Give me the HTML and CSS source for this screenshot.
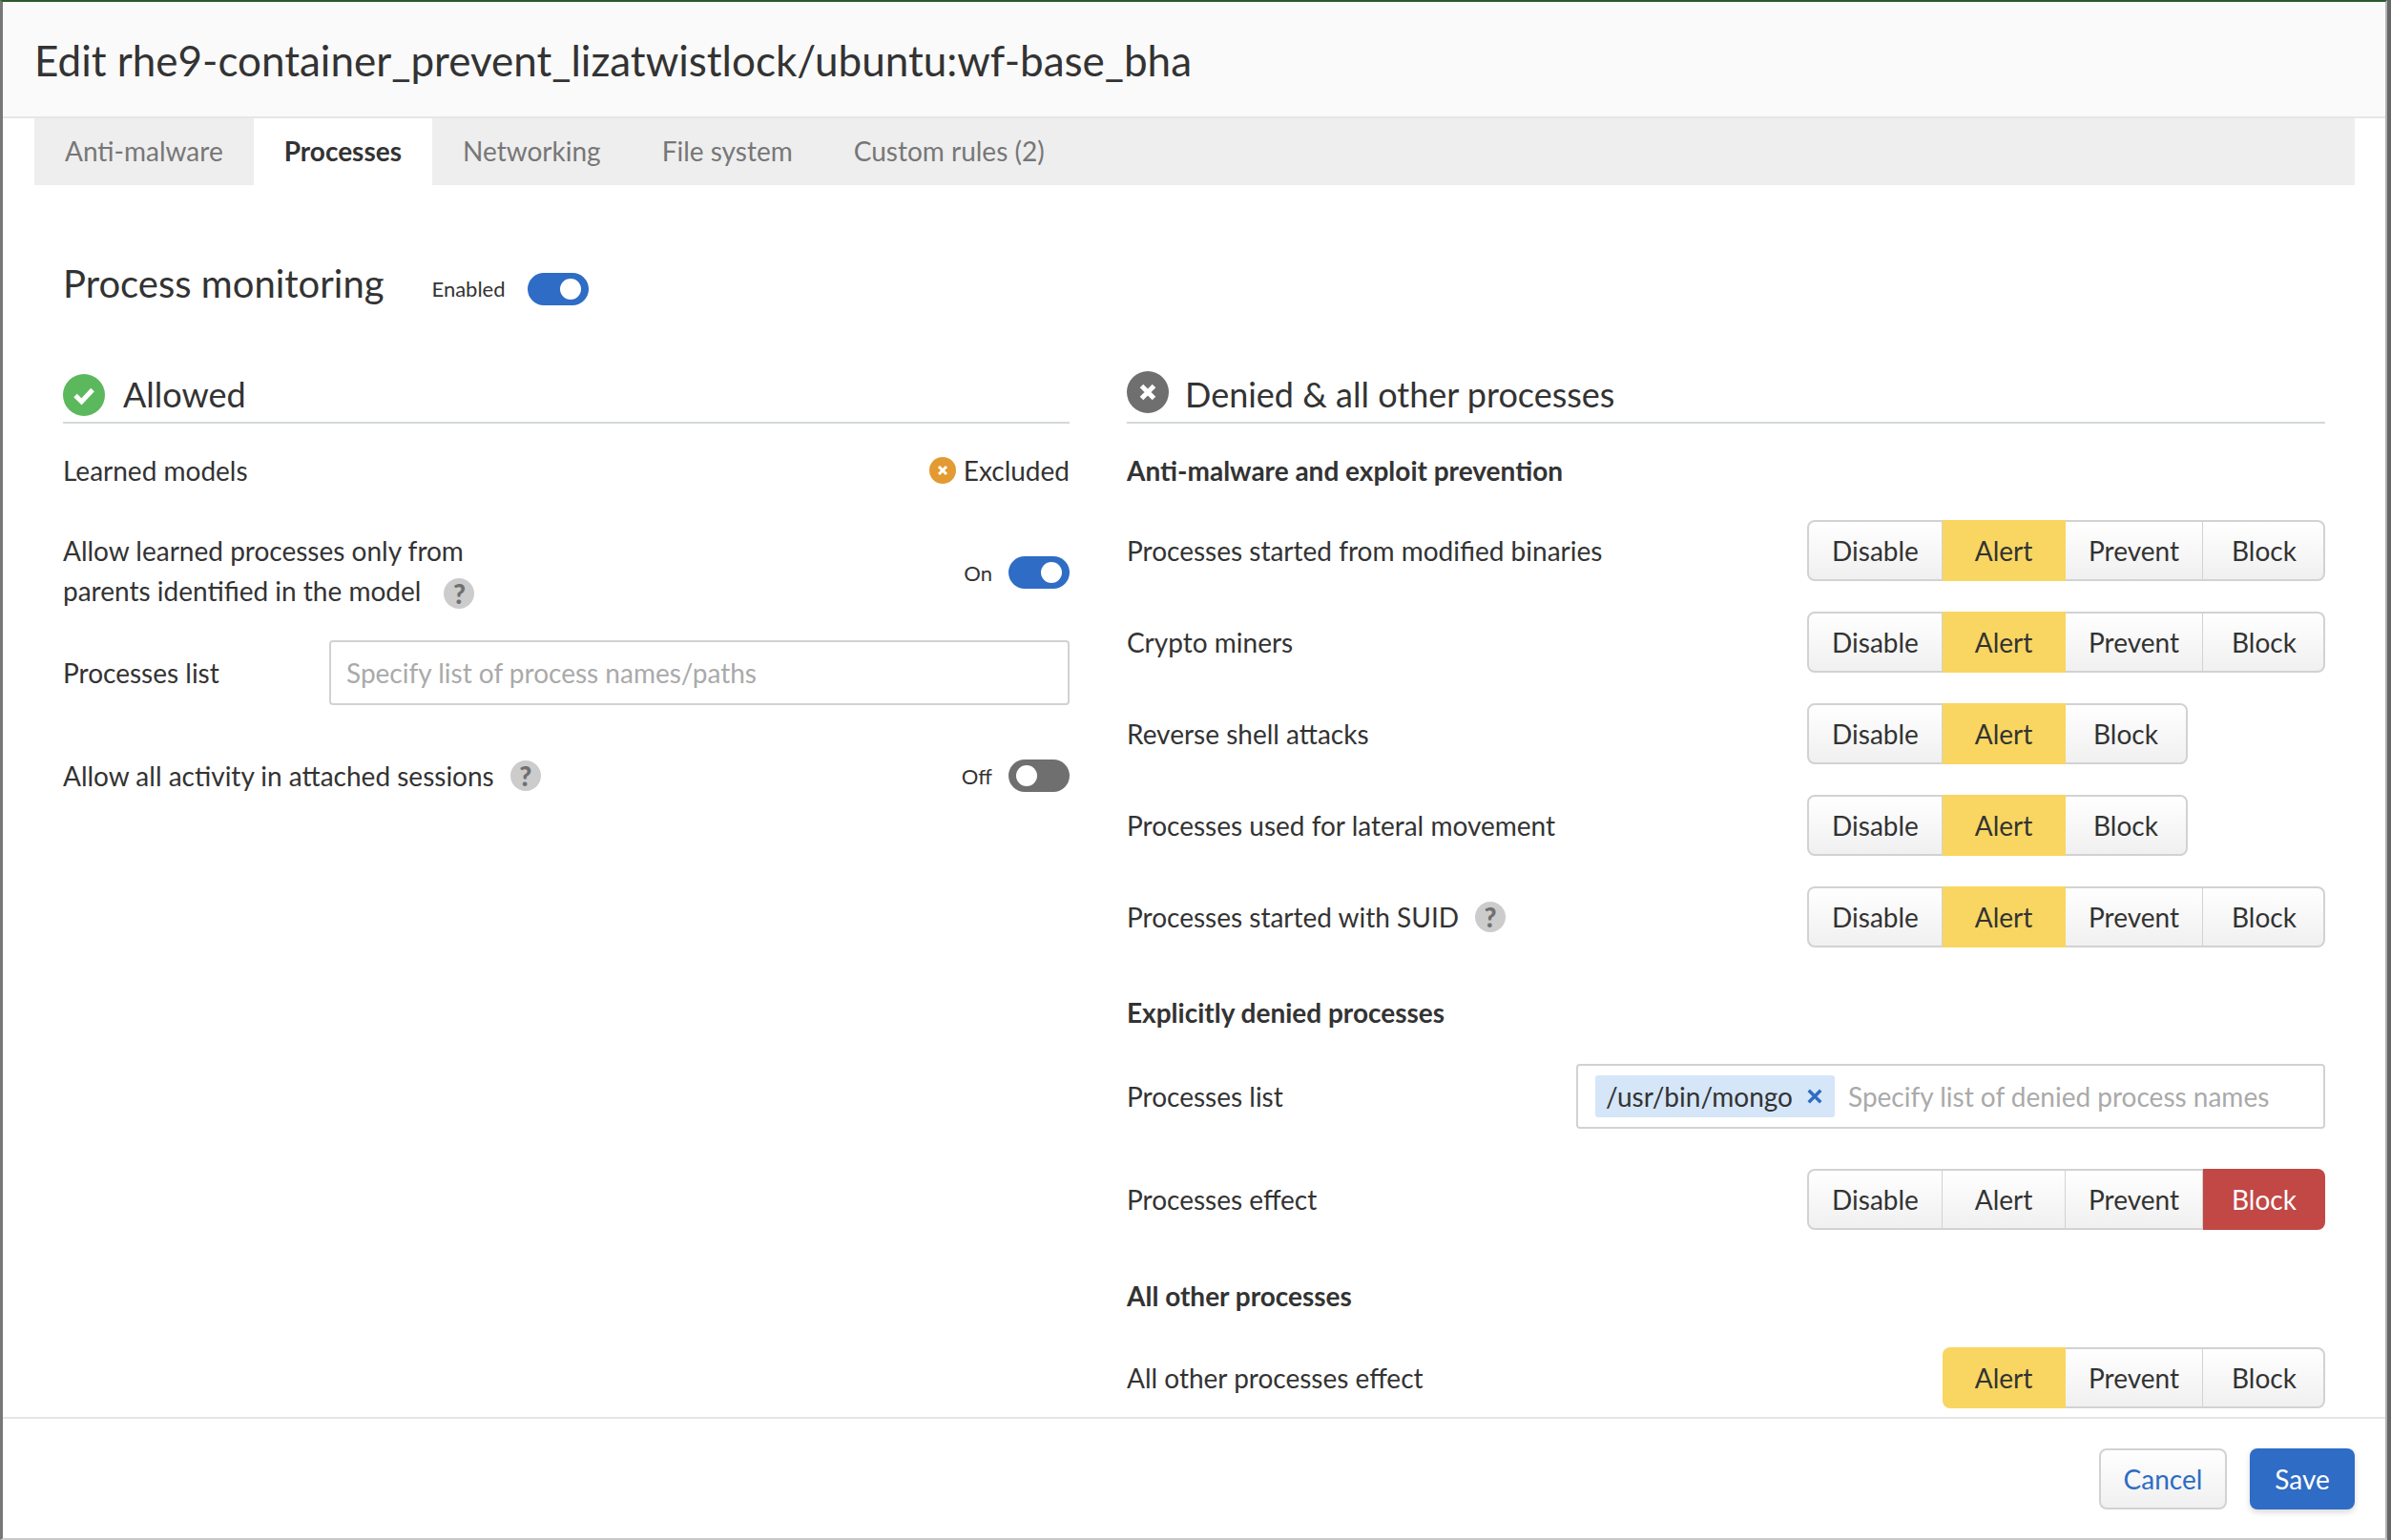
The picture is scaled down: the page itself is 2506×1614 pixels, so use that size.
FILE: index.html
```html
<!DOCTYPE html>
<html lang="en">
<head>
<meta charset="utf-8">
<title>Edit rule</title>
<link rel="stylesheet" href="styles.css">
</head>
<body>
<div class="modal">
  <header class="modal-header"><h1>Edit rhe9-container_prevent_lizatwistlock/ubuntu:wf-base_bha</h1></header>
  <nav class="tabs">
    <a class="tab">Anti-malware</a>
    <a class="tab active">Processes</a>
    <a class="tab">Networking</a>
    <a class="tab">File system</a>
    <a class="tab">Custom rules (2)</a>
  </nav>
  <main class="modal-body">
    <div class="monitoring">
      <h2>Process monitoring</h2>
      <span class="small-label">Enabled</span>
      <span class="toggle on"></span>
    </div>
    <div class="columns">
      <section>
        <div class="section-title">
          <svg class="section-icon" viewBox="0 0 44 44"><circle cx="22" cy="22" r="22" fill="#5cb85c"/><path d="M13 22.5l6.5 6.5 11.5-12.5" fill="none" stroke="#fff" stroke-width="5"/></svg>
          <h3>Allowed</h3>
        </div>
        <div class="left-row learned">
          <span>Learned models</span>
          <span class="excluded"><svg class="mini-icon" viewBox="0 0 28 28"><circle cx="14" cy="14" r="14" fill="#e39a33"/><path d="M10 10l8 8M18 10l-8 8" stroke="#fff" stroke-width="3"/></svg>Excluded</span>
        </div>
        <div class="left-row parents">
          <span class="two-line">Allow learned processes only from<br>parents identified in the model<span class="help help-wide">?</span></span>
          <span class="toggle-wrap lowered"><span class="small-label">On</span><span class="toggle on"></span></span>
        </div>
        <div class="left-row list">
          <span>Processes list</span>
          <input class="text-input" type="text" placeholder="Specify list of process names/paths">
        </div>
        <div class="left-row sessions">
          <span class="with-help">Allow all activity in attached sessions<span class="help">?</span></span>
          <span class="toggle-wrap"><span class="small-label">Off</span><span class="toggle"></span></span>
        </div>
      </section>
      <section>
        <div class="section-title">
          <svg class="section-icon raised" viewBox="0 0 44 44"><circle cx="22" cy="22" r="22" fill="#6f6f6f"/><path d="M15.5 15.5l13 13M28.5 15.5l-13 13" stroke="#fff" stroke-width="5"/></svg>
          <h3>Denied &amp; all other processes</h3>
        </div>
        <h4 class="first">Anti-malware and exploit prevention</h4>
        <div class="rule">
          <span>Processes started from modified binaries</span>
          <div class="seg"><button class="b-disable">Disable</button><button class="b-alert sel-alert">Alert</button><button class="b-prevent">Prevent</button><button class="b-block">Block</button></div>
        </div>
        <div class="rule">
          <span>Crypto miners</span>
          <div class="seg"><button class="b-disable">Disable</button><button class="b-alert sel-alert">Alert</button><button class="b-prevent">Prevent</button><button class="b-block">Block</button></div>
        </div>
        <div class="rule">
          <span>Reverse shell attacks</span>
          <div class="seg short"><button class="b-disable">Disable</button><button class="b-alert sel-alert">Alert</button><button class="b-block">Block</button></div>
        </div>
        <div class="rule">
          <span>Processes used for lateral movement</span>
          <div class="seg short"><button class="b-disable">Disable</button><button class="b-alert sel-alert">Alert</button><button class="b-block">Block</button></div>
        </div>
        <div class="rule">
          <span class="with-help">Processes started with SUID<span class="help">?</span></span>
          <div class="seg"><button class="b-disable">Disable</button><button class="b-alert sel-alert">Alert</button><button class="b-prevent">Prevent</button><button class="b-block">Block</button></div>
        </div>
        <h4 class="explicit">Explicitly denied processes</h4>
        <div class="rule tags-rule">
          <span>Processes list</span>
          <div class="tag-input">
            <span class="tag">/usr/bin/mongo<svg class="tag-x" viewBox="0 0 14 14"><path d="M1.5 1.5l11 11M12.5 1.5l-11 11" stroke="#2e6cc5" stroke-width="3"/></svg></span>
            <input class="tag-field" type="text" placeholder="Specify list of denied process names">
          </div>
        </div>
        <div class="rule effect-rule">
          <span>Processes effect</span>
          <div class="seg"><button class="b-disable">Disable</button><button class="b-alert">Alert</button><button class="b-prevent">Prevent</button><button class="b-block sel-block">Block</button></div>
        </div>
        <h4 class="others">All other processes</h4>
        <div class="rule">
          <span>All other processes effect</span>
          <div class="seg"><button class="b-alert sel-alert">Alert</button><button class="b-prevent">Prevent</button><button class="b-block">Block</button></div>
        </div>
      </section>
    </div>
  </main>
  <footer class="modal-footer">
    <button class="btn cancel">Cancel</button>
    <button class="btn save">Save</button>
  </footer>
</div>
</body>
</html>
```

FILE: styles.css
```css
* { box-sizing: border-box; }
html, body { margin: 0; height: 100%; }
body {
  font-family: Lato, "Open Sans", sans-serif;
  font-size: 28px;
  color: #333;
  background: #666;
  overflow: hidden;
}
h1, h2, h3, h4 { margin: 0; font-weight: 400; }
.modal {
  width: 2502px;
  height: 1614px;
  display: flex;
  flex-direction: column;
  background: #fff;
  border-top: 2px solid #2b5a2f;
  border-left: 3px solid #777;
  border-right: 2px solid #b4b4b4;
  border-bottom: 2px solid #c8c8c8;
}
.modal-header {
  height: 122px;
  flex: none;
  display: flex;
  align-items: center;
  padding: 2px 0 0 33px;
  background: #fafafa;
  border-bottom: 2px solid #e6e6e6;
}
h1 { font-size: 44px; line-height: 50px; }
.tabs {
  flex: none;
  height: 70px;
  margin: 0 32px 0 33px;
  display: flex;
  background: #eee;
}
.tab {
  display: flex;
  align-items: center;
  padding: 0 32px 2px;
  color: #777;
}
.tab.active { background: #fff; color: #333; font-weight: 700; }
.modal-body {
  flex: 1;
  min-height: 0;
  overflow: hidden;
  padding: 0 63px;
}
.monitoring {
  height: 199px;
  padding-top: 56px;
  display: flex;
  align-items: flex-start;
}
.monitoring h2 { font-size: 40px; line-height: 96px; margin-top: -1px; }
.monitoring .small-label { margin: 34px 23px 0 50px; line-height: 38px; }
.monitoring .toggle { margin-top: 36px; }
.small-label { font-size: 22px; color: #333; }
.toggle {
  display: inline-block;
  position: relative;
  flex: none;
  width: 64px;
  height: 34px;
  border-radius: 17px;
  background: #6f6f6f;
}
.toggle::after {
  content: "";
  position: absolute;
  top: 6px;
  left: 8px;
  width: 22px;
  height: 22px;
  border-radius: 50%;
  background: #fff;
}
.toggle.on { background: #2e6cc5; }
.toggle.on::after { left: 34px; }
.columns {
  display: grid;
  grid-template-columns: 1055px 1256px;
  column-gap: 60px;
  margin-top: -9px;
}
.section-title {
  height: 60px;
  padding-top: 6px;
  display: flex;
  align-items: flex-start;
  border-bottom: 2px solid #d4d8da;
}
.section-icon { width: 44px; height: 44px; flex: none; margin: 2px 19px 0 0; }
.section-icon.raised { margin: -1px 17px 0 0; }
h3 { font-size: 36px; line-height: 46px; }
.left-row {
  display: flex;
  align-items: center;
  justify-content: space-between;
}
.learned { height: 50px; margin-top: 24px; }
.excluded { display: flex; align-items: center; }
.mini-icon { width: 28px; height: 28px; margin-right: 8px; }
.parents { height: 84px; margin-top: 38px; }
.two-line { line-height: 42px; }
.toggle-wrap { display: flex; align-items: center; gap: 17px; }
.toggle-wrap.lowered { margin-top: 4px; }
.with-help { display: flex; align-items: center; }
.help {
  display: inline-block;
  flex: none;
  width: 32px;
  height: 32px;
  margin-left: 17px;
  border-radius: 50%;
  background: #ccc;
  color: #707070;
  font-size: 28px;
  font-weight: 900;
  line-height: 32px;
  text-align: center;
}
.help-wide { margin-left: 24px; vertical-align: -3px; }
.list { height: 68px; margin-top: 31px; }
.text-input {
  width: 776px;
  height: 68px;
  padding: 0 16px;
  border: 2px solid #d2d2d2;
  border-radius: 4px;
  font: inherit;
  color: #333;
}
input::placeholder { color: #aaa; opacity: 1; }
.sessions { height: 44px; margin-top: 52px; }
h4 { font-size: 28px; font-weight: 700; line-height: 50px; }
h4.first { margin-top: 24px; margin-bottom: 27px; }
h4.explicit { margin-top: 43px; margin-bottom: 29px; }
h4.others { margin-top: 44px; margin-bottom: 29px; }
.rule {
  height: 64px;
  margin-bottom: 32px;
  display: flex;
  align-items: center;
  justify-content: space-between;
}
.rule:has(+ h4) { margin-bottom: 0; }
.tags-rule { height: 68px; margin-bottom: 42px; }
.seg {
  display: flex;
  height: 64px;
}
.seg.short { margin-right: 144px; }
button { font: inherit; cursor: pointer; }
.seg button {
  height: 100%;
  padding: 0;
  margin: 0;
  color: #333;
  border: 2px solid #d2d2d2;
  border-left-width: 0;
  border-right: 1px solid #d2d2d2;
  background: linear-gradient(#fff, #f0f0f0);
}
.seg button:first-child { border-left: 2px solid #d2d2d2; border-radius: 8px 0 0 8px; }
.seg button.b-alert:first-child { padding-right: 2px; }
.seg button:last-child { border-right-width: 2px; border-radius: 0 8px 8px 0; padding-left: 2px; }
.seg.short button:last-child { padding-left: 0; }
.b-disable { width: 142px; }
.b-alert { width: 129px; }
.b-prevent { width: 144px; }
.b-block { width: 128px; }
.seg button.sel-alert { background: #f8d661; border-color: #f8d661; }
.seg button.sel-block { background: #c14845; border-color: #c14845; color: #fff; }
.tag-input {
  width: 785px;
  height: 68px;
  display: flex;
  align-items: center;
  padding-left: 18px;
  border: 2px solid #d2d2d2;
  border-radius: 4px;
}
.tag {
  display: flex;
  align-items: center;
  flex: none;
  width: 251px;
  height: 44px;
  padding-left: 11px;
  border-radius: 3px;
  background: #d5e6f8;
  line-height: 44px;
}
.tag-x { width: 16px; height: 16px; margin-left: 15px; }
.tag-field {
  flex: 1;
  min-width: 0;
  height: 44px;
  margin-left: 14px;
  padding: 0;
  border: 0;
  background: transparent;
  font: inherit;
  color: #333;
}
.modal-footer {
  flex: none;
  height: 127px;
  display: flex;
  justify-content: flex-end;
  align-items: flex-start;
  gap: 24px;
  padding: 31px 32px 0 0;
  border-top: 2px solid #e5e5e5;
}
.btn { height: 64px; border-radius: 8px; padding: 0; }
.cancel {
  width: 134px;
  color: #2e6cc5;
  border: 2px solid #d2d2d2;
  background: linear-gradient(#fff, #f0f0f0);
}
.save {
  width: 110px;
  color: #fff;
  border: 0;
  background: #2e6cc5;
  box-shadow: 0 3px 6px rgba(0, 0, 0, .15);
}
```
